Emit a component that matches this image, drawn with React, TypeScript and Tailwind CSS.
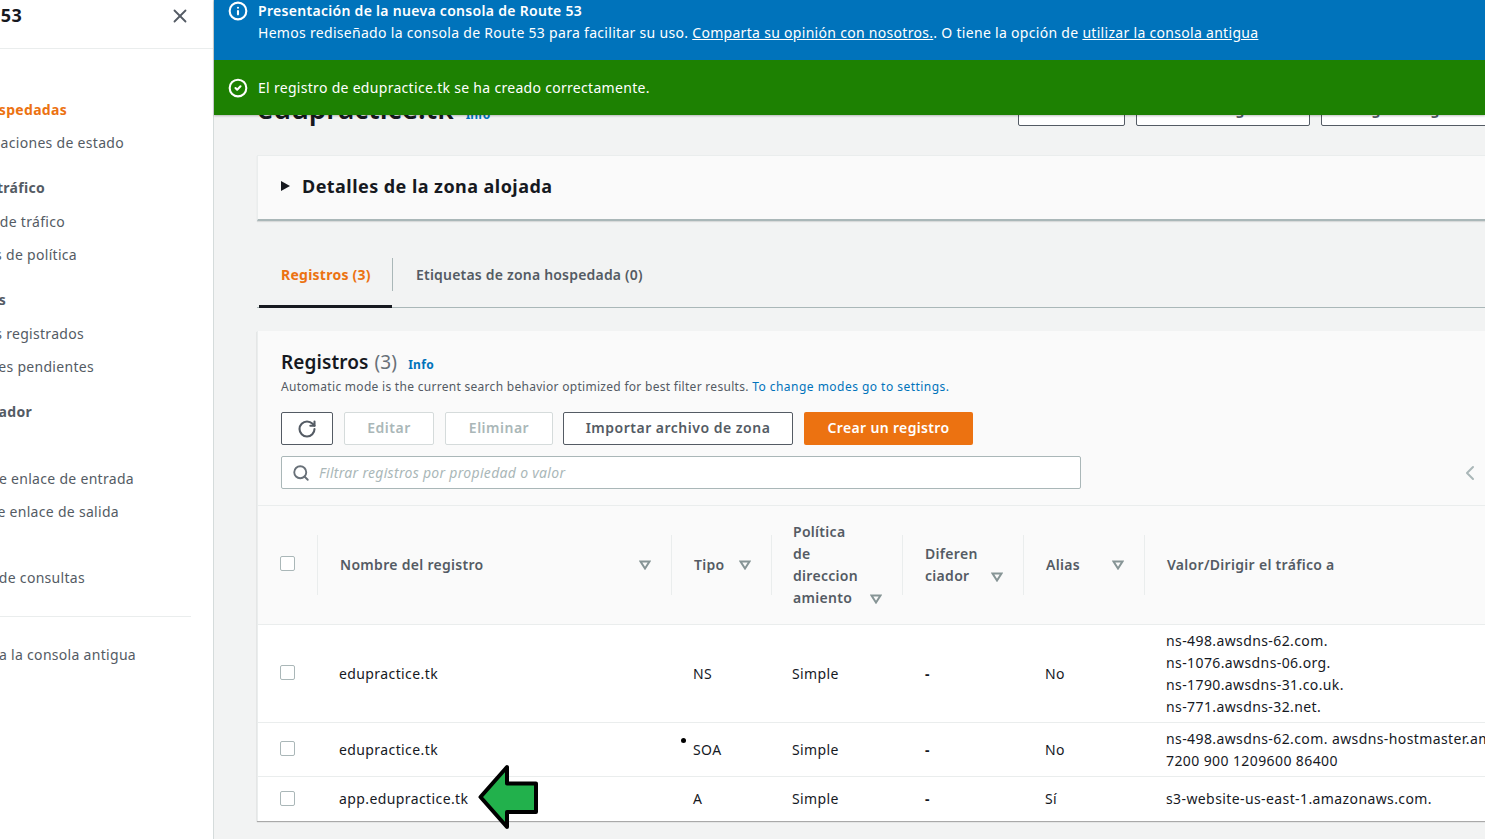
import { Info, CircleCheck, X, RotateCw, Search, ChevronLeft } from "lucide-react";

const font = { fontFamily: '"Noto Sans", "Open Sans", sans-serif' };

// the nav is scrolled off to the left, so each label is anchored on its right end
const navItems = [
  { label: "Zonas hospedadas", cls: "w-[67px] text-[#ec7211] font-bold", top: "mt-[50px]" },
  { label: "Comprobaciones de estado", cls: "w-[124px] text-[#545b64]", top: "mt-[11px]" },
  { label: "Flujo de tráfico", cls: "w-[45px] text-[#545b64] font-bold", top: "mt-[23px]" },
  { label: "Políticas de tráfico", cls: "w-[65px] text-[#545b64]", top: "mt-[12px]" },
  { label: "Registros de política", cls: "w-[77px] text-[#545b64]", top: "mt-[11px]" },
  { label: "Dominios", cls: "w-[6px] text-[#545b64] font-bold", top: "mt-[23px]" },
  { label: "Dominios registrados", cls: "w-[84px] text-[#545b64]", top: "mt-[12px]" },
  { label: "Solicitudes pendientes", cls: "w-[94px] text-[#545b64]", top: "mt-[11px]" },
  { label: "Solucionador", cls: "w-[32px] text-[#545b64] font-bold", top: "mt-[23px]" },
  { label: "Puntos de enlace de entrada", cls: "w-[134px] text-[#545b64]", top: "mt-[45px]" },
  { label: "Puntos de enlace de salida", cls: "w-[119px] text-[#545b64]", top: "mt-[11px]" },
  { label: "Registro de consultas", cls: "w-[85px] text-[#545b64]", top: "mt-[44px]" },
];

const columns =
  "grid grid-cols-[59px_354px_100px_131px_121px_121px_minmax(0,1fr)]";

function FilterIcon() {
  return (
    <svg width="12" height="10" viewBox="0 0 12 10" className="shrink-0">
      <path d="M1.5 1.5h9L6 8.5z" fill="#fafafa" stroke="#879596" strokeWidth="2" />
    </svg>
  );
}

function Checkbox() {
  return <div className="h-[15px] w-[15px] rounded-[2px] border border-[#aab7b8] bg-white" />;
}

function HeaderCell({ children, right = false }: { children: React.ReactNode; right?: boolean }) {
  return (
    <div className="flex h-[60px] items-center justify-between border-l border-[#eaeded] pl-[22px] pr-[20px] text-[14px] font-semibold leading-[22px] text-[#545b64]">
      {children}
      {right && <FilterIcon />}
    </div>
  );
}

const rows = [
  {
    name: "edupractice.tk",
    type: "NS",
    alias: "No",
    h: "h-[98px]",
    value: ["ns-498.awsdns-62.com.", "ns-1076.awsdns-06.org.", "ns-1790.awsdns-31.co.uk.", "ns-771.awsdns-32.net."],
  },
  {
    name: "edupractice.tk",
    type: "SOA",
    alias: "No",
    h: "h-[54px]",
    value: ["ns-498.awsdns-62.com. awsdns-hostmaster.amazon.com. 1", "7200 900 1209600 86400"],
  },
  {
    name: "app.edupractice.tk",
    type: "A",
    alias: "Sí",
    h: "h-[44px]",
    value: ["s3-website-us-east-1.amazonaws.com."],
  },
];

export default function App() {
  return (
    <div style={font} className="relative flex h-[839px] w-[1485px] overflow-hidden bg-[#f2f3f3] text-[14px] leading-[22px] tracking-[0.3px] text-[#16191f]">
      {/* Side nav, scrolled off to the left */}
      <aside className="h-full w-[214px] shrink-0 overflow-hidden border-r border-[#d5dbdb] bg-white">
        <div className="flex h-[49px] items-start justify-between border-b border-[#eaeded] pr-[22px]">
          <div className="mt-[1px] flex w-[22px] justify-end whitespace-nowrap text-[18px] font-bold leading-[28px]">Amazon Route 53</div>
          <X size={22} strokeWidth={2} className="mt-[5px] text-[#545b64]" />
        </div>
        <nav className="flex flex-col">
          {navItems.map((n) => (
            <div key={n.label} className={`${n.top} flex justify-end whitespace-nowrap ${n.cls}`}>
              {n.label}
            </div>
          ))}
        </nav>
        <div className="mr-[22px] mt-[27px] border-t border-[#eaeded]" />
        <div className="mt-[27px] flex w-[136px] justify-end whitespace-nowrap text-[#545b64]">Cambiar a la consola antigua</div>
      </aside>

      <main className="min-w-0 flex-1">
        {/* Flash messages */}
        <div className="relative z-10 shadow-[0_1px_2px_rgba(0,0,0,0.25)]">
          <div className="flex h-[60px] gap-[10px] bg-[#0073bb] pl-[14px] text-white">
            <Info size={20} strokeWidth={2.5} className="mt-[1px] shrink-0" />
            <div className="whitespace-nowrap leading-[22px]">
              <div className="font-semibold">Presentación de la nueva consola de Route 53</div>
              <div>
                Hemos rediseñado la consola de Route 53 para facilitar su uso.{" "}
                <span className="underline">Comparta su opinión con nosotros.</span>. O tiene la opción de{" "}
                <span className="underline">utilizar la consola antigua</span>
              </div>
            </div>
          </div>
          <div className="flex h-[55px] items-center gap-[10px] bg-[#1d8102] pl-[14px] text-white">
            <CircleCheck size={20} strokeWidth={2.5} className="shrink-0" />
            <span>El registro de edupractice.tk se ha creado correctamente.</span>
          </div>
        </div>

        <div className="w-[1400px] pl-[43px]">
          {/* Page title, mostly under the flash */}
          <div className="-mt-[33px] flex h-[44px] items-end justify-between">
            <div className="flex items-baseline gap-[12px] tracking-normal">
              <span className="text-[28px] font-semibold leading-[36px]">edupractice.tk</span>
              <span className="text-[12px] font-bold text-[#0073bb]">Info</span>
            </div>
            <div className="mr-[33px] flex gap-[11px]">
              {[
                ["Eliminar zona", "w-[107px]"],
                ["Probar registro", "w-[174px]"],
                ["Configurar registro de consultas", "w-[260px]"],
              ].map(([t, w]) => (
                <div key={t} className={`${w} h-[33px] rounded-[2px] border border-[#545b64] bg-white text-center font-bold leading-[31px] text-[#545b64] whitespace-nowrap`}>
                  {t}
                </div>
              ))}
            </div>
          </div>

          {/* Hosted zone details */}
          <div className="mt-[29px] flex h-[66px] items-center border-b-2 border-t border-b-[#aab7b8] border-t-[#eaeded] border-l border-l-[#eaeded] bg-[#fafafa] pb-[3px] pl-[23px] shadow-[0_1px_1px_rgba(0,0,0,0.1)]">
            <div className="h-0 w-0 border-y-[5.5px] border-l-[9px] border-y-transparent border-l-[#16191f]" />
            <span className="ml-[12px] text-[18px] font-bold tracking-[0.45px]">Detalles de la zona alojada</span>
          </div>

          {/* Tabs */}
          <div className="mt-[37px] flex h-[50px] border-b border-[#aab7b8]">
            <div className="ml-[2px] h-[50px] w-[133px] border-b-[3px] border-[#16191f] pl-[22px] pt-[6px] font-bold tracking-[0.25px] text-[#ec7211]">Registros (3)</div>
            <div className="mb-[16px] flex h-[33px] items-center border-l border-[#aab7b8] pl-[23px] font-semibold tracking-[0.2px] text-[#545b64]">
              Etiquetas de zona hospedada (0)
            </div>
          </div>

          {/* Records table */}
          <div className="mt-[23px] border-l border-[#eaeded] bg-[#fafafa] shadow-[0_1px_1px_rgba(0,0,0,0.3)]">
            <div className="h-[175px] border-b border-[#eaeded] pl-[23px] pt-[19px]">
              <div className="flex items-baseline leading-[24px] tracking-[0.1px]">
                <span className="text-[19px] font-semibold">Registros</span>
                <span className="ml-[6px] text-[19px] text-[#687078]">(3)</span>
                <span className="ml-[11px] text-[12px] font-bold tracking-[0.3px] text-[#0073bb]">Info</span>
              </div>
              <div className="mt-[1px] text-[12px] leading-[18px] tracking-[0.29px] text-[#545b64]">
                Automatic mode is the current search behavior optimized for best filter results.{" "}
                <span className="tracking-[0.47px] text-[#0073bb]">To change modes go to settings.</span>
              </div>
              <div className="mt-[16px] flex h-[33px] gap-[11px] font-semibold tracking-[0.5px]">
                <div className="flex w-[52px] items-center justify-center rounded-[2px] border border-[#545b64] bg-white text-[#545b64]">
                  <RotateCw size={20} strokeWidth={2.5} />
                </div>
                <div className="flex w-[90px] items-center justify-center rounded-[2px] border border-[#d5dbdb] bg-white pb-[1px] text-[#aab7b8]">Editar</div>
                <div className="flex w-[108px] items-center justify-center rounded-[2px] border border-[#d5dbdb] bg-white pb-[1px] text-[#aab7b8]">Eliminar</div>
                <div className="-ml-[1px] flex w-[230px] items-center justify-center rounded-[2px] border border-[#545b64] bg-white pb-[1px] text-[#545b64]">Importar archivo de zona</div>
                <div className="flex w-[169px] items-center justify-center rounded-[2px] bg-[#ec7211] pb-[1px] tracking-[0.35px] text-white">Crear un registro</div>
              </div>
              <div className="mt-[11px] flex items-center">
                <div className="flex h-[33px] w-[800px] items-center rounded-[2px] border border-[#aab7b8] bg-white pl-[10px]">
                  <Search size={18} strokeWidth={2.5} className="text-[#687078]" />
                  <span className="ml-[9px] italic text-[#aab7b8]">Filtrar registros por propiedad o valor</span>
                </div>
                <ChevronLeft size={24} strokeWidth={2} className="ml-[377px] text-[#aab7b8]" />
              </div>
            </div>

            <div className={`${columns} h-[119px] items-center border-b border-[#eaeded]`}>
              <div className="pl-[22px] -mt-[4px]">
                <Checkbox />
              </div>
              <HeaderCell right>Nombre del registro</HeaderCell>
              <HeaderCell right>Tipo</HeaderCell>
              <div className="relative flex h-[60px] items-center border-l border-[#eaeded] pl-[21px] pr-[20px] font-semibold text-[#545b64]">
                <div className="relative">
                  Política
                  <br />
                  de
                  <br />
                  direccion
                  <br />
                  amiento
                  <span className="absolute bottom-[5px] left-[77px]">
                    <FilterIcon />
                  </span>
                </div>
              </div>
              <div className="flex h-[60px] items-center border-l border-[#eaeded] pl-[22px] font-semibold text-[#545b64]">
                <div className="relative">
                  Diferen
                  <br />
                  ciador
                  <span className="absolute bottom-[5px] left-[66px]">
                    <FilterIcon />
                  </span>
                </div>
              </div>
              <HeaderCell right>Alias</HeaderCell>
              <div className="flex h-[60px] items-center whitespace-nowrap border-l border-[#eaeded] pl-[22px] font-semibold text-[#545b64]">
                Valor/Dirigir el tráfico a
              </div>
            </div>

            {rows.map((r, i) => (
              <div key={i} className={`${columns} ${r.h} items-center border-b border-[#eaeded] bg-white tracking-[0.4px] last:border-b-0`}>
                <div className="pl-[22px] -mt-[2px]">
                  <Checkbox />
                </div>
                <div className="pl-[22px]">{r.name}</div>
                <div className="pl-[22px]">{r.type}</div>
                <div className="pl-[21px]">Simple</div>
                <div className="pl-[23px] font-bold">-</div>
                <div className="pl-[22px]">{r.alias}</div>
                <div className="whitespace-nowrap pl-[22px]">
                  {r.value.map((v) => (
                    <div key={v}>{v}</div>
                  ))}
                </div>
              </div>
            ))}
          </div>
        </div>
      </main>

      {/* Annotations drawn on top of the screenshot */}
      <div className="absolute left-[681px] top-[738px] h-[5px] w-[5px] rounded-full bg-black" />
      <svg className="absolute left-[476px] top-[762px]" width="66" height="68" viewBox="0 0 66 68">
        <path d="M4.5 35 L31 5 V21.5 H60 V50 H31 V65 Z" fill="#22b14c" stroke="#000" strokeWidth="4" strokeLinejoin="round" />
      </svg>
    </div>
  );
}
